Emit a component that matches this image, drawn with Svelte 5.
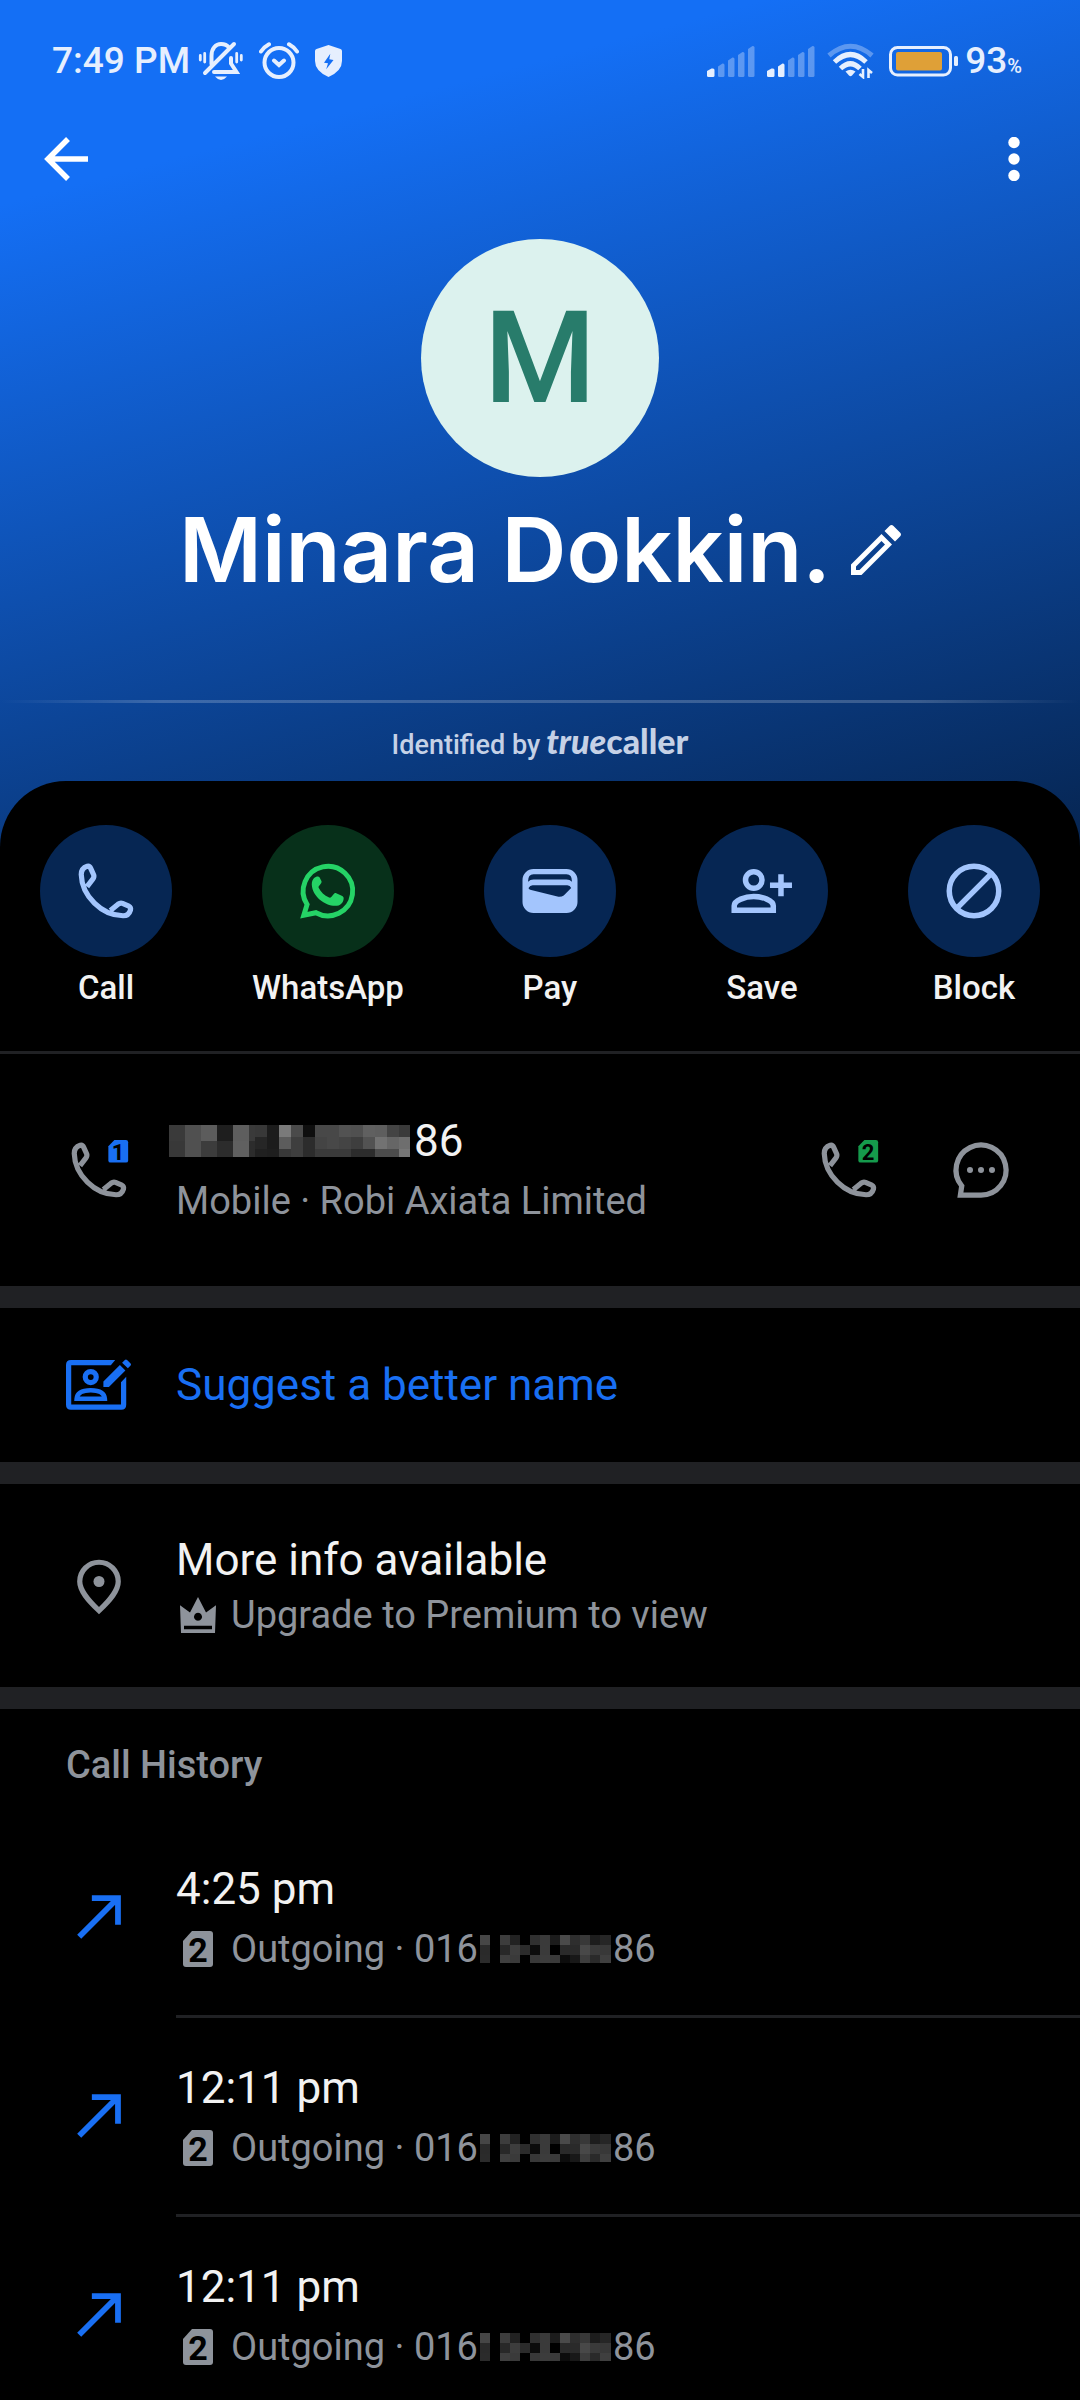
<script>
  const actions = [
    { label: 'Call', icon: 'phone' },
    { label: 'WhatsApp', icon: 'whatsapp' },
    { label: 'Pay', icon: 'wallet' },
    { label: 'Save', icon: 'addPerson' },
    { label: 'Block', icon: 'block' }
  ];

  const calls = [{ time: '4:25 pm' }, { time: '12:11 pm' }, { time: '12:11 pm' }];

  const signalBars = [
    'M0 29.5V25l4.500-2.500h1.500q1.500 0 1.500 1.500v5.500q0 1.500-1.500 1.500h-4.500q-1.500 0-1.500-1.500z',
    'M11 29.500V20.500l4.500-3h.5q1.500 0 1.500 1.500v10.500q0 1.500-1.500 1.500h-3.500q-1.500 0-1.500-1.500z',
    'M21 29.500V14.500l4.500-3h.5q1.500 0 1.500 1.500v16.500q0 1.500-1.500 1.500h-3.500q-1.500 0-1.500-1.500z',
    'M31 29.500V9l4.500-3h.5q1.500 0 1.500 1.500v22q0 1.500-1.500 1.500h-3.500q-1.500 0-1.500-1.500z',
    'M41 29.500V3l4.500-3h.5q1.500 0 1.500 1.500v28q0 1.500-1.500 1.500h-3.500q-1.500 0-1.500-1.500z'
  ];

  // Grey levels of the masked digits, column by column.
  const numberMask = [
    { x: 0, w: 16, h: 16, shades: ['3a', '38'] },
    { x: 16, w: 16, h: 16, shades: ['50', '50'] },
    { x: 32, w: 16, h: 16, shades: ['5c', '3c'] },
    { x: 48, w: 16, h: 16, shades: ['1e', '2c'] },
    { x: 64, w: 16, h: 16, shades: ['5e', '60'] },
    { x: 80, w: 6, h: 16, shades: ['3a', '2c'] },
    ...[
      ['38', '26', '20'], ['1c', '1c', '1e'], ['7a', '5c', '38'], ['4a', '3e', '3e'],
      ['0e', '2c', '2c'], ['48', '44', '3a'], ['48', '48', '3a'], ['52', '44', '3a'],
      ['50', '3e', '2c'], ['60', '52', '2c'], ['5e', '72', '4c'], ['44', '66', '4c'],
      ['3a', '6e', '76']
    ].map((shades, i) => ({ x: 86 + i * 12, w: 12, h: 12, shades }))
  ];

  const historyMask = [
    ['46', '2a', '2b'], ['00', '00', '00'], ['3d', '28', '3f'], ['22', '3d', '3a'],
    ['00', '2b', '00'], ['30', '0c', '38'], ['3a', '3a', '3c'], ['1c', '00', '3a'],
    ['4a', '2a', '0c'], ['2e', '2a', '18'], ['38', '48', '3d'], ['1d', '3a', '2a'],
    ['26', '38', '3f']
  ].map((shades, i) => ({ x: i * 10, w: i === 12 ? 11 : 10, h: 10, shades }));
</script>

{#snippet mask(columns, width, height)}
  <svg class="mask" {width} {height} viewBox="0 0 {width} {height}" shape-rendering="crispEdges" aria-hidden="true">
    {#each columns as c}
      {#each c.shades as s, i}
        <rect x={c.x} y={i * c.h} width={c.w} height={c.h} fill="#{s}{s}{s}" />
      {/each}
    {/each}
  </svg>
{/snippet}

{#snippet handset()}
  <path d="M5.100 10.400L7.200 7.700Q7.800 6.900 7.500 6.100L6.400 3.700Q6 2.800 5.200 3Q3 3.700 3 6C3.200 13.800 10.500 21 18.200 21Q20.300 21 20.900 18.900Q21.100 18 20.300 17.500L18 16.500Q17.200 16.200 16.400 16.800L13.600 19.100" fill="none" stroke="currentColor" stroke-width="1.900" stroke-linejoin="round" />
{/snippet}

{#snippet simPhone(n)}
  <svg class="icon" viewBox="0 0 24 24" aria-hidden="true">
    {@render handset()}
    <g class={n === 1 ? 'sim-blue' : 'sim-green'}>
      <path d="M17.600 1.100h4.200q.8 0 .8.8v6.600q0 .8-.8.800h-5.600q-.8 0-.8-.8V3.400z" fill="currentColor" />
    </g>
    <text x="18.900" y="8.200" class="sim-digit">{n}</text>
  </svg>
{/snippet}

{#snippet simCard()}
  <svg class="sim-card" viewBox="0 0 30 36" aria-hidden="true">
    <path d="M9 0h18q3 0 3 3v30q0 3-3 3H3q-3 0-3-3V10z" fill="currentColor" />
    <text x="15" y="31" class="sim-card-digit">2</text>
  </svg>
{/snippet}

{#snippet signal(level)}
  <svg width="48" height="31" viewBox="0 0 48 31" aria-hidden="true">
    {#each signalBars as d, i}
      <path {d} fill="currentColor" opacity={i < level ? 1 : 0.35} />
    {/each}
  </svg>
{/snippet}

{#snippet actionIcon(name)}
  <svg class="icon" viewBox="0 0 24 24" fill="none" stroke="currentColor" stroke-width="2" aria-hidden="true">
    {#if name === 'phone'}
      {@render handset()}
    {:else if name === 'whatsapp'}
      <path d="M3.200 20.800L4.400 16.900A9 9 0 1 1 7.600 19.900Z" stroke-width="1.800" />
      <path stroke="none" fill="currentColor" d="M8.300 6.700c-.9 0-2.200.8-2.200 2.900C6.300 14 10.900 17.300 14.600 17.400c1.900 0 3-1.100 3.100-2.800 0-.4-.2-.6-.5-.8l-2.200-1c-.4-.1-.7 0-.9.3l-.9 1.100c-.2.2-.5.3-.8.2-1.800-.8-3-2-3.800-3.600-.1-.3 0-.5.2-.7l.7-.9c.2-.3.200-.5.100-.8L8.900 7c-.1-.2-.3-.3-.6-.3z" />
    {:else if name === 'wallet'}
      <path stroke="none" fill="currentColor" fill-rule="evenodd" d="M6 4h12a4 4 0 0 1 4 4v8a4 4 0 0 1-4 4H6a4 4 0 0 1-4-4V8a4 4 0 0 1 4-4zM6 5.900q-2 0-2 2.700 .8-.8 2-.8h12q1.200 0 2 .8 0-2.700-2-2.700zM5.700 9.900q-1 0-1.500 1 0 .4.600.6l9.900 2.500q1.300.3 2.300-.4l2.700-2.700q-.4-1-1.400-1z" />
    {:else if name === 'addPerson'}
      <circle cx="9" cy="8" r="3" />
      <path d="M1.900 19h14.200v-1.600c0-2-4-3.400-7.100-3.400s-7.100 1.400-7.100 3.400z" />
      <path d="M14.900 9.900h8M18.900 5.900v8" />
    {:else}
      <circle cx="12" cy="12" r="9" />
      <path d="M5.700 18.300L18.300 5.700" />
    {/if}
  </svg>
{/snippet}

<div class="screen">
  <header class="hero">
    <div class="status">
      <div class="status-group">
        <span class="clock">7:49 PM</span>
        <svg width="45" height="40" viewBox="0 0 45 40" fill="none" stroke="currentColor" stroke-width="4" stroke-linecap="round" aria-hidden="true">
          <path d="M13.500 23V15C13.500 7 18 3 23 3C27 3 29.500 4.500 31 6.500M7 32L36 3M33 17V22.500L38.500 31H16" />
          <path d="M17 35.500H29Q26 39 23 39Q20 39 17 35.500z" stroke="none" fill="currentColor" />
          <path d="M2.300 14.500v4.500M6.700 12.500v8.500M38.700 12.500v8.500M43.300 14.500v4.500" stroke-width="2.800" />
        </svg>
        <svg class="alarm" width="40" height="38" viewBox="0 0 40 38" fill="none" stroke="currentColor" stroke-width="4" stroke-linecap="round" aria-hidden="true">
          <circle cx="20" cy="20.500" r="14.500" />
          <path d="M15 18.500l5 4.500 5-4.500M2 9.500Q5 5 10 2.300M38 9.500Q35 5 30 2.300" />
        </svg>
        <svg width="27" height="32" viewBox="0 0 27 32" fill="currentColor" aria-hidden="true">
          <path fill-rule="evenodd" d="M13.500 0L25.500 4Q27 4.500 27 6V16Q27 26 13.500 32Q0 26 0 16V6Q0 4.500 1.500 4zM15.300 8.800L9 17.700 13 18.300 11.200 24.300 18.500 15 14.300 14.300z" />
        </svg>
      </div>
      <div class="status-group right">
        {@render signal(1)}
        {@render signal(2)}
        <svg width="47" height="36" viewBox="0 0 47 36" fill="none" stroke="currentColor" stroke-width="5" stroke-linecap="butt" aria-hidden="true">
          <path d="M2 12.500Q23.500-6 45 12.500" opacity=".35" />
          <path d="M7.500 19Q23.500 4 39 19M13.500 25.500Q23.500 16 33 25.500" />
          <path d="M18.500 28.500Q23.500 25 28.500 28.500L25 32.500Q23.500 34 22 32.500z" fill="currentColor" stroke="none" />
          <path d="M36 26v8l-3.500-3M41.500 35v-8l3.500 3" stroke-width="2.600" />
        </svg>
        <svg class="battery" width="70" height="31" viewBox="0 0 70 31" aria-hidden="true">
          <rect x="1.500" y="1.500" width="60" height="27.500" rx="7" fill="none" stroke="currentColor" stroke-width="3" />
          <rect x="7" y="6" width="46" height="18.500" rx="2" fill="#dfa037" />
          <rect x="65" y="10" width="4" height="10" rx="1.500" fill="currentColor" />
        </svg>
        <span class="charge">93<small>%</small></span>
      </div>
    </div>

    <nav class="toolbar">
      <button aria-label="Back">
        <svg width="44" height="44" viewBox="0 0 44 44" fill="none" stroke="currentColor" stroke-width="5.500" aria-hidden="true">
          <path d="M44 22H4M24 2L4 22L24 42" />
        </svg>
      </button>
      <button aria-label="More options">
        <svg width="44" height="44" viewBox="0 0 44 44" fill="currentColor" aria-hidden="true">
          <circle cx="22" cy="5.500" r="5.700" /><circle cx="22" cy="22" r="5.700" /><circle cx="22" cy="38.500" r="5.700" />
        </svg>
      </button>
    </nav>

    <div class="avatar">M</div>
    <div class="name-row">
      <h1>Minara Dokkin.</h1>
      <button aria-label="Edit name">
        <svg width="50" height="50" viewBox="0 0 50 50" aria-hidden="true">
          <path fill="currentColor" fill-rule="evenodd" d="M0 50V39.500L30.500 9 41 19.500 10.500 50zM5 45H8.500L34 19.500 30.500 16 5 41.500zM33.500 6L38.500 1Q40.500-1 42.500 1L49 7.500Q51 9.500 49 11.500L44 16.500z" />
        </svg>
      </button>
    </div>

    <div class="rule"></div>
    <p class="identified">Identified by <span class="brand"><i>true</i>caller</span></p>
  </header>

  <main class="sheet">
    <div class="actions">
      {#each actions as a}
        <button class="action">
          <span class="disc" class:green={a.icon === 'whatsapp'}>{@render actionIcon(a.icon)}</span>
          <span>{a.label}</span>
        </button>
      {/each}
    </div>

    <section class="row number">
      {@render simPhone(1)}
      <div class="text">
        <p class="title masked">{@render mask(numberMask, 241, 32)}<span>86</span></p>
        <p class="sub">Mobile · Robi Axiata Limited</p>
      </div>
      <div class="tools">
        <button aria-label="Call with SIM 2">{@render simPhone(2)}</button>
        <button aria-label="Message">
          <svg class="icon" viewBox="0 0 24 24" fill="none" stroke="currentColor" stroke-width="1.900" aria-hidden="true">
            <path d="M12 21.100H4.500L5 17.800A9.100 9.100 0 1 1 12 21.100z" />
            <g fill="currentColor" stroke="none"><circle cx="8" cy="12" r="1.100" /><circle cx="12" cy="12" r="1.100" /><circle cx="16" cy="12" r="1.100" /></g>
          </svg>
        </button>
      </div>
    </section>

    <section class="row suggest">
      <svg class="icon" viewBox="0 0 24 24" fill="none" stroke="currentColor" stroke-width="1.900" aria-hidden="true">
        <path fill="currentColor" stroke="none" d="M1.800 2.900H17.900L16.300 4.800H1.900V19.100H20V11L21.900 9V19.200Q21.900 21 20.100 21H1.800Q0 21 0 19.200V4.700Q0 2.900 1.800 2.900z" />
        <circle cx="9" cy="9.100" r="2" />
        <path d="M3.900 17h10.200q-.2-3.100-5.100-3.100t-5.100 3.100z" stroke-width="1.700" />
        <path fill="currentColor" stroke="none" d="M13.600 10.700L19.600 4.700 21.600 6.700 15.600 12.700H13.600zM20.400 3.900L21.400 2.900Q21.800 2.500 22.200 2.900L23.500 4.200Q23.800 4.500 23.500 4.900L22.500 5.900z" />
      </svg>
      <a class="title" href="#suggest">Suggest a better name</a>
    </section>

    <section class="row more">
      <svg class="icon" viewBox="0 0 24 24" fill="none" stroke="currentColor" stroke-width="1.900" aria-hidden="true">
        <path d="M12 20.600C8 16.800 5 13.400 5 10a7 7 0 0 1 14 0C19 13.400 16 16.800 12 20.600z" />
        <circle cx="12" cy="10" r="2" fill="currentColor" stroke="none" />
      </svg>
      <div class="text">
        <p class="title">More info available</p>
        <p class="sub">
          <span class="mini">
            <svg width="36" height="36" viewBox="0 0 36 36" aria-hidden="true">
              <path fill="currentColor" fill-rule="evenodd" d="M0 8.300L10 15.500 18 0 26 15.500 36 8.300 35 36H1zM4 28.700V32.300H32V28.700zM18 15.700a4 4 0 1 0 .01 0z" />
            </svg>
          </span>
          Upgrade to Premium to view
        </p>
      </div>
    </section>

    <h2>Call History</h2>
    <ul>
      {#each calls as call}
        <li>
          <svg class="icon arrow" viewBox="0 0 24 24" fill="none" stroke="currentColor" stroke-width="2.100" aria-hidden="true">
            <path d="M4.800 19.200L18.700 5.300M9.400 5.100H18.900V14.800" />
          </svg>
          <div class="text">
            <p class="title">{call.time}</p>
            <p class="sub"><span class="mini">{@render simCard()}</span>Outgoing · 016{@render mask(historyMask, 131, 28)}86</p>
          </div>
        </li>
      {/each}
    </ul>
  </main>
</div>

<style>
  :global(body) { margin: 0; background: #000; }
  .screen { font-family: Roboto, sans-serif; color: #f2f2f2; background: #000; overflow: hidden; }
  p, h1, h2, ul { margin: 0; padding: 0; }
  svg { display: block; flex: none; }
  button { border: 0; padding: 0; margin: 0; background: none; color: inherit; font: inherit; cursor: pointer; }

  .hero {
    display: flex;
    flex-direction: column;
    align-items: center;
    padding-bottom: 85px;
    color: #fff;
    background: linear-gradient(165deg, #146ff5 18%, #062551 100%);
  }
  .status {
    align-self: stretch;
    display: flex;
    justify-content: space-between;
    padding: 40px 58px 0 52px;
    color: #e6effe;
    font-size: 37px;
    font-weight: 500;
    line-height: 42px;
  }
  .status-group { display: flex; align-items: center; gap: 16px; }
  .clock { margin-right: -8px; }
  .right { gap: 12px; }
  .battery { margin: 0 -6px 0 3px; }
  small { font-size: 20px; line-height: 0; }
  .toolbar { align-self: stretch; display: flex; justify-content: space-between; padding: 55px 44px 58px; }
  .toolbar button { height: 44px; }

  .avatar {
    width: 238px;
    height: 238px;
    border-radius: 50%;
    background: #dcf2ee;
    color: #287c6b;
    font-size: 128px;
    font-weight: 500;
    line-height: 238px;
    text-align: center;
  }
  .name-row { display: flex; align-items: center; gap: 20px; margin: 21px 0 98px; }
  h1 { font: 600 90px/104px Inter, sans-serif; }
  .rule {
    align-self: stretch;
    height: 3px;
    background: linear-gradient(90deg, transparent, rgba(255, 255, 255, 0.2) 15%, rgba(255, 255, 255, 0.2) 85%, transparent);
  }
  .identified {
    display: flex;
    align-items: baseline;
    gap: 6px;
    height: 40px;
    padding: 18px 0 1px;
    font-size: 27px;
    font-weight: 500;
    line-height: 40px;
    color: #c5d1e6;
  }
  .brand { font: 900 34px/40px Lato, sans-serif; }

  .sheet { position: relative; margin-top: -66px; border-radius: 66px 66px 0 0; background: #000; }
  .actions {
    display: flex;
    justify-content: space-between;
    padding: 44px 40px 43px;
    border-bottom: 3px solid #202124;
  }
  .action {
    display: flex;
    flex-direction: column;
    align-items: center;
    gap: 11px;
    min-width: 132px;
    font-size: 33px;
    font-weight: 500;
    line-height: 40px;
  }
  .disc {
    display: grid;
    place-items: center;
    width: 132px;
    height: 132px;
    border-radius: 50%;
    background: #062653;
    color: #a3c5fd;
  }
  .green { background: #07301a; color: #25d366; }
  .icon { width: 66px; height: 66px; overflow: visible; }

  .row { display: flex; align-items: center; gap: 44px; padding: 0 66px; color: #8e939b; border-bottom: 22px solid #202124; }
  .number { padding-top: 61px; padding-bottom: 61px; }
  .suggest { padding-top: 44px; padding-bottom: 44px; color: #196ff3; }
  .more { padding-top: 50px; padding-bottom: 48px; }
  .text { flex: 1; display: flex; flex-direction: column; gap: 10px; }
  .more .text { gap: 5px; }
  .title { font-size: 44px; line-height: 52px; color: #f2f2f2; }
  .suggest .title { color: inherit; text-decoration: none; }
  .masked { display: flex; align-items: center; gap: 4px; margin-left: -7px; }
  .sub { display: flex; align-items: center; font-size: 38px; line-height: 48px; color: #8e939b; }
  .sub .mask { margin: 0 2px; }
  .mini { display: grid; place-items: center; width: 44px; margin-right: 11px; }
  .tools { display: flex; gap: 66px; }

  .sim-blue { color: #196ff3; }
  .sim-green { color: #159a4c; }
  .sim-digit { font: 700 8px Roboto, sans-serif; text-anchor: middle; fill: #000; }
  .sim-card { width: 30px; height: 36px; overflow: visible; }
  .sim-card-digit { font: 700 34px Roboto, sans-serif; text-anchor: middle; fill: #000; }

  h2 { padding: 32px 66px 30px; font-size: 38px; font-weight: 500; line-height: 48px; color: #8e939b; }
  ul { list-style: none; }
  li { display: flex; gap: 44px; padding-left: 66px; }
  li .text { padding: 44px 0 42px; border-bottom: 3px solid #202124; }
  li:last-child .text { padding-bottom: 30px; border: 0; }
  .arrow { margin-top: 65px; color: #196ff3; }
</style>
